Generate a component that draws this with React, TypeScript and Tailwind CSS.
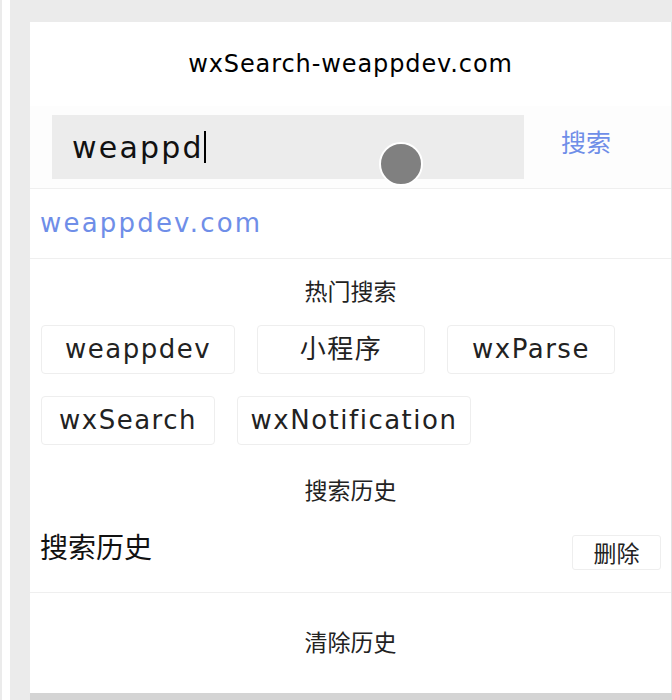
const latin = "font-['DejaVu_Sans','Noto_Sans_CJK_SC',sans-serif]"
const cjk = "font-['Noto_Sans_CJK_SC',sans-serif]"

const hotWords = [
  { word: 'weappdev', w: 'w-[194px]' },
  { word: '小程序', w: 'w-[168px]' },
  { word: 'wxParse', w: 'w-[168px]' },
  { word: 'wxSearch', w: 'w-[174px]' },
  { word: 'wxNotification', w: 'w-[234px]' },
]

export default function App() {
  return (
    <div className={`h-[700px] overflow-hidden bg-[#ebebeb] flex ${latin}`}>
      {/* left gutter */}
      <div className="w-[2px] shrink-0" />
      <div className="w-[8px] shrink-0 bg-white" />
      <div className="w-[20px] shrink-0" />

      <div className="flex-1 flex flex-col pt-[22px]">
        <div className="flex-1 bg-white border-r border-[#e2e2e2] flex flex-col">
          {/* title bar */}
          <div className="h-[84px] flex items-center justify-center text-[24px] tracking-[0.9px] text-black">
            wxSearch-weappdev.com
          </div>

          {/* search bar */}
          <div className="relative h-[83px] flex items-start border-b border-[#efefef] bg-[#fdfdfd]">
            <div className="ml-[22px] mt-[9px] w-[472px] h-[64px] bg-[#ececec] flex items-center pl-[20px]">
              <span className="text-[30px] tracking-[2.2px] text-[#111]">weappd</span>
              <span className="w-[2px] h-[32px] bg-black" />
            </div>
            <div className={`ml-[37px] mt-[17px] text-[25px] text-[#6f8ee8] ${cjk}`}>搜索</div>
            {/* touch point */}
            <div className="absolute left-[349px] top-[36px] w-[44px] h-[44px] rounded-full bg-[#808080] border-2 border-white" />
          </div>

          {/* suggestion */}
          <div className="h-[70px] flex items-center pl-[10px] border-b border-[#efefef] text-[26px] tracking-[2.2px] text-[#6f8ee8]">
            weappdev.com
          </div>

          {/* hot search */}
          <div className={`h-[66px] pb-[4px] flex items-center justify-center text-[23px] text-[#222] ${cjk}`}>热门搜索</div>
          <div className="flex flex-wrap gap-x-[22px] gap-y-[22px] pl-[11px] pr-[40px]">
            {hotWords.map((t) => (
              <div
                key={t.word}
                className={`${t.w} h-[49px] flex items-center justify-center border border-[#eeeeee] rounded-[4px] text-[26px] tracking-[1.5px] text-[#222]`}
              >
                {t.word}
              </div>
            ))}
          </div>

          {/* history */}
          <div className={`mt-[10px] h-[70px] pb-[2px] flex items-center justify-center text-[23px] text-[#222] ${cjk}`}>搜索历史</div>
          <div className={`h-[68px] flex items-start justify-between pl-[10px] pr-[10px] border-b border-[#efefef] ${cjk}`}>
            <span className="text-[28px] text-[#111]">搜索历史</span>
            <button className="mt-[10px] w-[89px] h-[35px] border border-[#eeeeee] rounded-[3px] text-[23px] text-[#222] flex items-center justify-center">
              删除
            </button>
          </div>

          <div className={`flex-1 pb-[4px] flex items-center justify-center text-[23px] text-[#222] ${cjk}`}>清除历史</div>
        </div>
        <div className="h-[7px] bg-[#d4d4d4] shrink-0" />
      </div>
    </div>
  )
}
